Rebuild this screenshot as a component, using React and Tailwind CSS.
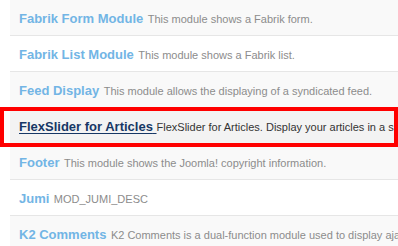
import React from "react";

const rows = [
  { t: "Fabrik Form Module", d: "This module shows a Fabrik form.", bg: "bg-[#f9f9f9]" },
  { t: "Fabrik List Module", d: "This module shows a Fabrik list.", bg: "bg-white" },
  { t: "Feed Display", d: "This module allows the displaying of a syndicated feed.", bg: "bg-[#f9f9f9]" },
  { t: "FlexSlider for Articles", d: "FlexSlider for Articles. Display your articles in a slideshow.", bg: "bg-[#f3f3f3]", active: true },
  { t: "Footer", d: "This module shows the Joomla! copyright information.", bg: "bg-[#f9f9f9]" },
  { t: "Jumi", d: "MOD_JUMI_DESC", bg: "bg-white" },
  { t: "K2 Comments", d: "K2 Comments is a dual-function module used to display ajax comments.", bg: "bg-[#f9f9f9]" },
];

export default function App() {
  return (
    <div
      className="relative w-[398px] h-[246px] overflow-hidden bg-white pl-[10px]"
      style={{ fontFamily: '"Liberation Sans", Arial, sans-serif' }}
    >
      <div className="-mt-px flex flex-col">
        {rows.map((r) => (
          <div
            key={r.t}
            className={`h-[36px] flex items-center border-t border-[#e6e6e6] pl-[9px] overflow-hidden whitespace-nowrap ${r.bg}`}
          >
            <span className="leading-none">
              {r.active ? (
                <span className="text-[13px] font-bold text-[#163765] underline decoration-[#163765] underline-offset-2">
                  {r.t}{" "}
                </span>
              ) : (
                <span className="text-[13px] font-bold text-[#72b5e5]">{r.t}</span>
              )}
              {r.active ? "" : " "}
              <span className={`text-[11px] ${r.active ? "text-[#333333]" : "text-[#8c8c8c]"}`}>
                {r.active ? " " : ""}
                {r.d}
              </span>
            </span>
          </div>
        ))}
      </div>
      <div className="absolute left-0 top-[107px] w-[398px] h-[40px] border-4 border-[#ff0000] pointer-events-none" />
    </div>
  );
}
